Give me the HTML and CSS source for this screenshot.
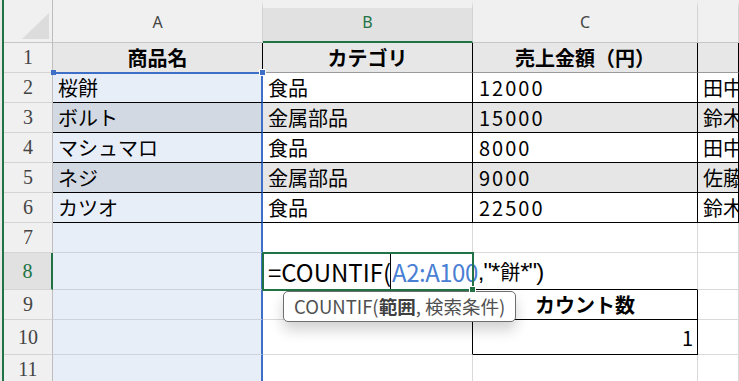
FILE: index.html
```
<!DOCTYPE html>
<html lang="ja">
<head>
  <meta charset="UTF-8" />
  <title>COUNTIF</title>
  <link rel="stylesheet" href="styles.css">
</head>
<body>
  <div class="sheet">
    <div class="edge"></div>

    <!-- column headers -->
    <div class="corner">
      <svg width="48" height="43" viewBox="0 0 48 43"><polygon points="45,13 18,39 45,39" fill="#dcdcdc"/></svg>
    </div>
    <div class="ch">A</div>
    <div class="ch on">B</div>
    <div class="ch">C</div>
    <div class="ch"></div>

    <!-- row 1 -->
    <div class="rh">1</div>
    <div class="c t th">商品名</div>
    <div class="c t th">カテゴリ</div>
    <div class="c t th">売上金額（円）</div>
    <div class="c t th"></div>

    <div class="rh">2</div>
    <div class="c t sel first">桜餅</div>
    <div class="c t">食品</div>
    <div class="c t num">12000</div>
    <div class="c t">田中</div>

    <div class="rh">3</div>
    <div class="c t alt sel">ボルト</div>
    <div class="c t alt">金属部品</div>
    <div class="c t alt num">15000</div>
    <div class="c t alt">鈴木</div>

    <div class="rh">4</div>
    <div class="c t sel">マシュマロ</div>
    <div class="c t">食品</div>
    <div class="c t num">8000</div>
    <div class="c t">田中</div>

    <div class="rh">5</div>
    <div class="c t alt sel">ネジ</div>
    <div class="c t alt">金属部品</div>
    <div class="c t alt num">9000</div>
    <div class="c t alt">佐藤</div>

    <div class="rh">6</div>
    <div class="c t sel">カツオ</div>
    <div class="c t">食品</div>
    <div class="c t num">22500</div>
    <div class="c t">鈴木</div>

    <div class="rh">7</div>
    <div class="c sel"></div>
    <div class="c"></div>
    <div class="c"></div>
    <div class="c"></div>

    <div class="rh on">8</div>
    <div class="c sel"></div>
    <div class="c active">
      <span class="formula">=COUNTIF(<span class="caret"></span><span class="ref">A2:A100</span><span class="tail">,"*<span class="kanji">餅</span>*")</span></span>
      <div class="tip">COUNTIF(<b>範囲</b>, 検索条件)</div>
    </div>
    <div class="c box-top"></div>
    <div class="c"></div>

    <div class="rh">9</div>
    <div class="c sel"></div>
    <div class="c box-left"></div>
    <div class="c box th-plain">カウント数</div>
    <div class="c"></div>

    <div class="rh">10</div>
    <div class="c sel"></div>
    <div class="c box-left"></div>
    <div class="c box result">1</div>
    <div class="c"></div>

    <div class="rh">11</div>
    <div class="c sel"></div>
    <div class="c"></div>
    <div class="c"></div>
    <div class="c"></div>
  </div>
</body>
</html>
```
FILE: styles.css
```
:root{
  --grid:#d9d9d9;
  --hdr:#f0f0f0;
  --hdr-on:#e1e1e1;
  --green:#217346;
  --blue:#3d6fc6;
  --tint:rgba(111,149,211,.16);
}
html,body{margin:0;height:381px;overflow:hidden;background:#fff;}
body{font-family:"Noto Sans CJK JP","Noto Sans",sans-serif;color:#000;}

.sheet{
  display:grid;
  grid-template-columns:4px 49px 210px 210px 225px 1fr;
  grid-template-rows:43px repeat(7,30px) 37px 30px 35px 30px;
  width:739px;
}
.edge{grid-column:1;grid-row:1 / -1;background:#e9e9e9;border-right:2px solid var(--green);box-sizing:border-box;}

.corner{background:var(--hdr);border-right:1px solid #bdbdbd;border-bottom:1px solid #c6c6c6;box-sizing:border-box;}
.corner svg{display:block;}
.ch{
  background:var(--hdr);border-top:8px solid var(--hdr);border-right:1px solid #d2d2d2;border-bottom:1px solid #c6c6c6;
  box-sizing:border-box;display:flex;align-items:center;justify-content:center;padding-bottom:6px;
  font-family:"Noto Sans",sans-serif;font-size:16px;color:#444;
}
.ch.on{background:var(--hdr-on);color:var(--green);border-bottom:2px solid var(--green);padding-bottom:5px;}

.rh{
  grid-column:2;background:var(--hdr);border-right:1px solid #bdbdbd;border-bottom:1px solid #d4d4d4;
  box-sizing:border-box;display:flex;align-items:center;justify-content:center;
  font-family:"Liberation Serif",serif;font-size:20px;color:#444;
}
.rh.on{background:var(--hdr-on);color:var(--green);border-right:2px solid var(--green);}

.c{
  box-sizing:border-box;border-right:1px solid var(--grid);border-bottom:1px solid var(--grid);
  display:flex;align-items:center;padding:0 5px;white-space:nowrap;overflow:hidden;
  font-size:20px;background-color:#fff;
}
.c.t{border-color:#000;}
.th{background-color:#e7e7e7;font-weight:bold;justify-content:center;border-bottom-color:#9a9a9a !important;}
.alt{background-color:#e6e6e6;}
.num{padding-left:6px;letter-spacing:2px;}

/* selected range A2:A100 */
.sel{
  background-image:linear-gradient(var(--tint),var(--tint));
  border-right:2px solid var(--blue) !important;
  border-bottom-color:#cdd3dc;
}
.sel.t{border-bottom-color:#000;}
.sel.first{position:relative;overflow:visible;}
.sel.first::before{content:"";position:absolute;left:-1px;right:-2px;top:-1px;height:2px;background:var(--blue);}
.sel.first::after{
  content:"";position:absolute;right:-5px;top:-4px;width:5px;height:5px;background:var(--blue);
  border:1px solid #fff;box-shadow:-209px 0 0 -1px var(--blue);
}

.box-top{border-bottom-color:#000;}
.box-left{border-right-color:#000;}
.box{border-right-color:#000;border-bottom-color:#000;}
.th-plain{font-weight:bold;justify-content:center;}
.result{justify-content:flex-end;padding-right:4px;}

.active{
  position:relative;z-index:3;overflow:visible;
  outline:2px solid var(--green);outline-offset:-1px;
  border-right-color:#000;
}
.active::after{
  content:"";position:absolute;right:-4px;bottom:-4px;width:5px;height:5px;
  background:var(--green);border:1px solid #fff;
}
.formula{font-size:24px;display:flex;align-items:center;height:100%;}
.caret{display:inline-block;width:0;height:36px;border-left:1px solid #000;margin:0 1px 0 -1px;}
.ref{color:#4a80d4;letter-spacing:-.5px;}
.tail{font-family:"Liberation Sans","Noto Sans CJK JP",sans-serif;letter-spacing:-1px;}
.kanji{font-family:"Noto Sans CJK JP",sans-serif;font-size:20px;margin:0 1px;}

.tip{
  position:absolute;left:20px;top:38px;
  padding:1px 10px 2px;border:1.5px solid #6e6e6e;border-radius:5px;background:#fff;
  font-size:18.5px;color:#505050;white-space:nowrap;
  box-shadow:0 8px 14px rgba(0,0,0,.18);
}
.tip b{color:#404040;}
```
